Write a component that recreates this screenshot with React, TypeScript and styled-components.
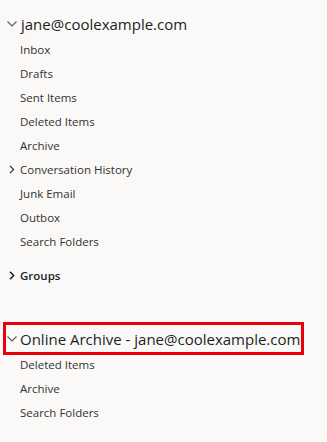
import styled, { createGlobalStyle } from "styled-components";

const GlobalStyle = createGlobalStyle`
  html, body {
    margin: 0;
    padding: 0;
    background: #faf9f8;
  }
  body {
    font-family: "Open Sans", "Noto Sans", sans-serif;
    color: #323130;
  }
`;

const Pane = styled.nav`
  width: 327px;
  height: 442px;
  padding-top: 10px;
  box-sizing: border-box;
  display: flex;
  flex-direction: column;
`;

const Section = styled.div<{ $gap?: number }>`
  display: flex;
  flex-direction: column;
  margin-top: ${(p) => p.$gap ?? 0}px;
`;

const AccountRow = styled.div<{ $boxed?: boolean }>`
  display: flex;
  align-items: center;
  height: 27px;
  padding-left: 6px;
  gap: 3px;
  font-size: 15px;
  color: #201f1e;
  white-space: nowrap;
  svg {
    flex-shrink: 0;
  }
  ${(p) =>
    p.$boxed &&
    `
    margin-left: 6px;
    padding-left: 0;
    gap: 2px;
    width: 295px;
    outline: 3px solid #e8000b;
  `}
`;

const FolderRow = styled.div<{ $bold?: boolean }>`
  display: flex;
  align-items: center;
  height: 24px;
  padding-left: 20px;
  position: relative;
  font-size: 11.5px;
  font-weight: ${(p) => (p.$bold ? 600 : 400)};
  color: ${(p) => (p.$bold ? "#201f1e" : "#323130")};
  white-space: nowrap;
`;

const Twisty = styled.span`
  position: absolute;
  left: 9px;
  top: 50%;
  margin-top: -4px;
  display: flex;
`;

function ChevronDown() {
  return (
    <svg width="12" height="8" viewBox="0 0 12 8">
      <path d="M1.5 1.5 L6 6 L10.5 1.5" fill="none" stroke="#605e5c" strokeWidth="1.2" />
    </svg>
  );
}

function ChevronRight({ bold }: { bold?: boolean }) {
  return (
    <svg width="6" height="9" viewBox="0 0 6 9">
      <path d="M1 0.8 L4.6 4.5 L1 8.2" fill="none" stroke={bold ? "#201f1e" : "#323130"} strokeWidth={bold ? 1.5 : 1.2} />
    </svg>
  );
}

const mainFolders = [
  "Inbox",
  "Drafts",
  "Sent Items",
  "Deleted Items",
  "Archive",
  "Conversation History",
  "Junk Email",
  "Outbox",
  "Search Folders",
];

const archiveFolders = ["Deleted Items", "Archive", "Search Folders"];

export default function App() {
  return (
    <>
      <GlobalStyle />
      <Pane>
        <Section>
          <AccountRow>
            <ChevronDown />
            jane@coolexample.com
          </AccountRow>
          {mainFolders.map((f) => (
            <FolderRow key={f}>
              {f === "Conversation History" && (
                <Twisty>
                  <ChevronRight />
                </Twisty>
              )}
              {f}
            </FolderRow>
          ))}
        </Section>
        <Section $gap={10}>
          <FolderRow $bold>
            <Twisty>
              <ChevronRight bold />
            </Twisty>
            Groups
          </FolderRow>
        </Section>
        <Section $gap={38}>
          <AccountRow $boxed>
            <ChevronDown />
            Online Archive - jane@coolexample.com
          </AccountRow>
          {archiveFolders.map((f) => (
            <FolderRow key={f}>{f}</FolderRow>
          ))}
        </Section>
      </Pane>
    </>
  );
}
